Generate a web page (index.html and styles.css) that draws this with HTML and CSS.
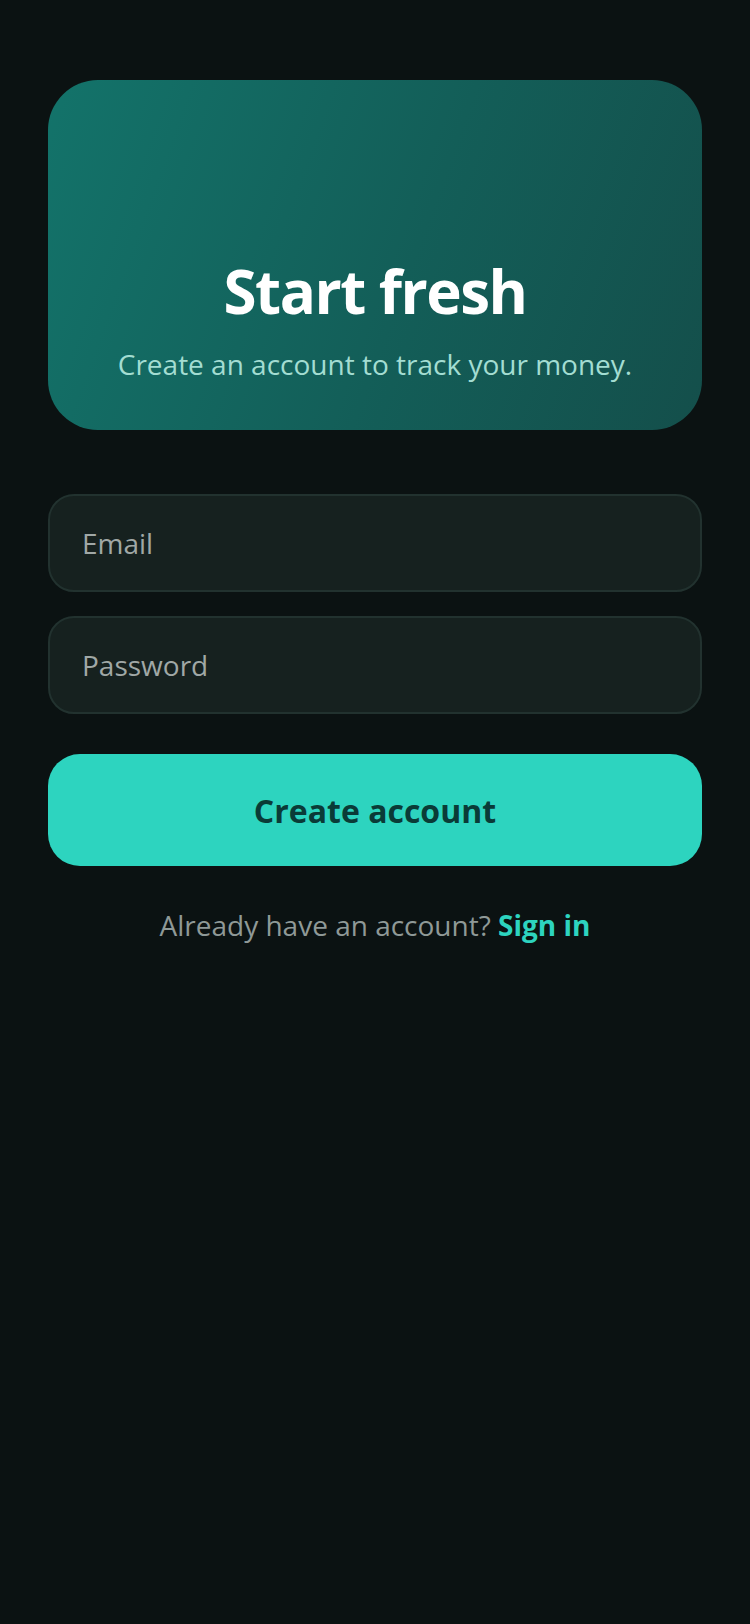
FILE: index.html
```html
<!DOCTYPE html>
<html lang="en">
<head>
  <meta charset="UTF-8">
  <title>Start fresh</title>
  <link rel="stylesheet" href="styles.css">
</head>
<body>

  <div class="page">
    <div class="hero">
      <h1>Start fresh</h1>
      <p>Create an account to track your money.</p>
    </div>

    <form class="form" onsubmit="return false">
      <input type="email" class="field" placeholder="Email">
      <input type="password" class="field" placeholder="Password">
      <button type="submit" class="btn">Create account</button>
    </form>

    <p class="switch">Already have an account? <a href="#">Sign in</a></p>
  </div>

</body>
</html>
```

FILE: styles.css
```css
html, body {
  margin: 0;
  background-color: #0b1212;
}
body {
  font-family: 'Open Sans', 'Noto Sans', sans-serif;
  color: #fff;
}
.page {
  padding: 80px 48px 0;
}
.hero {
  height: 350px;
  box-sizing: border-box;
  border-radius: 50px;
  background: linear-gradient(110deg, #13736a 0%, #135e58 55%, #144f4b 100%);
  display: flex;
  flex-direction: column;
  justify-content: flex-end;
  align-items: center;
  padding: 0 24px 48px;
  text-align: center;
}
.hero h1 {
  margin: 0 0 19px;
  font-size: 60px;
  line-height: 72px;
  font-weight: 700;
  letter-spacing: -1.5px;
}
.hero p {
  margin: 0;
  font-size: 28px;
  line-height: 36px;
  color: #a3ddd2;
}
.form {
  margin-top: 64px;
  display: flex;
  flex-direction: column;
  gap: 24px;
}
.field {
  height: 98px;
  box-sizing: border-box;
  padding: 0 32px;
  background: #16211f;
  border: 2px solid #22322f;
  border-radius: 26px;
  font-family: inherit;
  font-size: 28px;
  color: #e6ecea;
  outline: none;
}
.field::placeholder {
  color: #a0a8a6;
}
.btn {
  margin-top: 16px;
  height: 112px;
  border: none;
  border-radius: 32px;
  background: #2dd4bf;
  color: #0a3b37;
  font-family: inherit;
  font-size: 32px;
  font-weight: 700;
  cursor: pointer;
}
.switch {
  margin: 39px 0 0;
  text-align: center;
  font-size: 28px;
  line-height: 40px;
  color: #8f9997;
}
.switch a {
  color: #2dd4bf;
  font-weight: 700;
  text-decoration: none;
}
```
